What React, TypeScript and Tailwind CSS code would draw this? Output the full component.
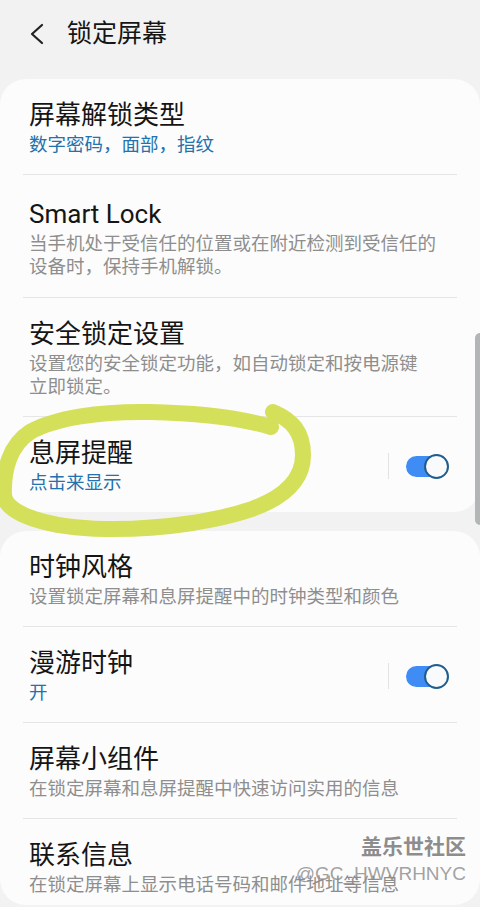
import type { ReactNode } from "react";

const font = { fontFamily: 'Roboto, "Noto Sans CJK SC", sans-serif' };

function Toggle() {
  return (
    <>
      <div className="h-[26px] w-px bg-[#e2e2e2]" />
      <div className="relative ml-[17px] h-[25px] w-[43px]">
        <div className="absolute left-0 top-[2px] h-[21px] w-[34px] rounded-full bg-[#3f8cf4]" />
        <div className="absolute right-0 top-0 h-[25px] w-[25px] rounded-full border-2 border-[#1f5d8f] bg-[#f8fafc]" />
      </div>
    </>
  );
}

function Item({
  title,
  sub,
  blue,
  toggle,
  last,
  className = "pt-[20px] pb-[17px]",
}: {
  title: string;
  sub: ReactNode;
  blue?: boolean;
  toggle?: boolean;
  last?: boolean;
  className?: string;
}) {
  return (
    <div className={`flex items-center px-[6px] pr-[8px] ${className} ${last ? "" : "border-b border-[#e6e6e6]"}`}>
      <div className="flex-1">
        <div className="text-[26px] leading-[32px] text-[#151515]">{title}</div>
        <div className={`mt-[3px] text-[18.5px] leading-[23px] ${blue ? "text-[#2371ad]" : "text-[#8e8e8e]"}`}>{sub}</div>
      </div>
      {toggle && <Toggle />}
    </div>
  );
}

export default function App() {
  return (
    <div className="relative h-[907px] w-[480px] overflow-hidden bg-[#f2f2f2]" style={font}>
      <div className="mb-[11px] flex h-[68px] items-center pl-[29px]">
        <svg width="16" height="22" viewBox="0 0 16 22" fill="none">
          <path d="M13 2 L3 11 L13 20" stroke="#222" strokeWidth="2.2" strokeLinecap="round" strokeLinejoin="round" />
        </svg>
        <span className="ml-[22px] text-[25px] leading-[32px] text-[#151515]">锁定屏幕</span>
      </div>

      <div className="rounded-[26px] bg-[#fcfcfc] px-[23px]">
        <Item title="屏幕解锁类型" sub="数字密码，面部，指纹" blue />
        <Item
          title="Smart Lock"
          className="pt-[23px] pb-[18px]"
          sub={
            <>
              当手机处于受信任的位置或在附近检测到受信任的
              <br />
              设备时，保持手机解锁。
            </>
          }
        />
        <Item
          title="安全锁定设置"
          sub={
            <>
              设置您的安全锁定功能，如自动锁定和按电源键
              <br />
              立即锁定。
            </>
          }
        />
        <Item title="息屏提醒" sub="点击来显示" blue toggle last />
      </div>

      <div className="mt-[19px] rounded-[26px] bg-[#fcfcfc] px-[23px]">
        <Item title="时钟风格" sub="设置锁定屏幕和息屏提醒中的时钟类型和颜色" />
        <Item title="漫游时钟" sub="开" blue toggle />
        <Item title="屏幕小组件" sub="在锁定屏幕和息屏提醒中快速访问实用的信息" />
        <Item title="联系信息" sub="在锁定屏幕上显示电话号码和邮件地址等信息" last className="pt-[20px] pb-[8px]" />
      </div>

      <div className="absolute right-0 top-[333px] h-[192px] w-[5px] rounded-l-full bg-[#b3b6b6]" />

      <svg className="pointer-events-none absolute left-0 top-0" width="480" height="907" viewBox="0 0 480 907" fill="none">
        <path
          d="M271 427 C240 418 200 413 150 412 C100 411 55 418 30 432 C10 445 3 470 4 495 C6 515 50 528 105 529 C165 530 220 520 252 509 C285 497 303 480 303 455 C303 432 292 420 273 412"
          stroke="#d5e05a"
          strokeWidth="16"
          strokeLinecap="round"
          strokeLinejoin="round"
        />
      </svg>

      <div className="absolute right-[14px] top-[832px] text-right">
        <div className="text-[21px] font-bold leading-[30px] text-[#8d8d8d] [text-shadow:1px_1px_0_#ffffff]">盖乐世社区</div>
        <div
          className="text-[19px] leading-[24px] text-[#8a8a8a]/80"
          style={{ fontFamily: '"Liberation Sans", sans-serif' }}
        >
          @GC_HWVRHNYC
        </div>
      </div>
    </div>
  );
}
